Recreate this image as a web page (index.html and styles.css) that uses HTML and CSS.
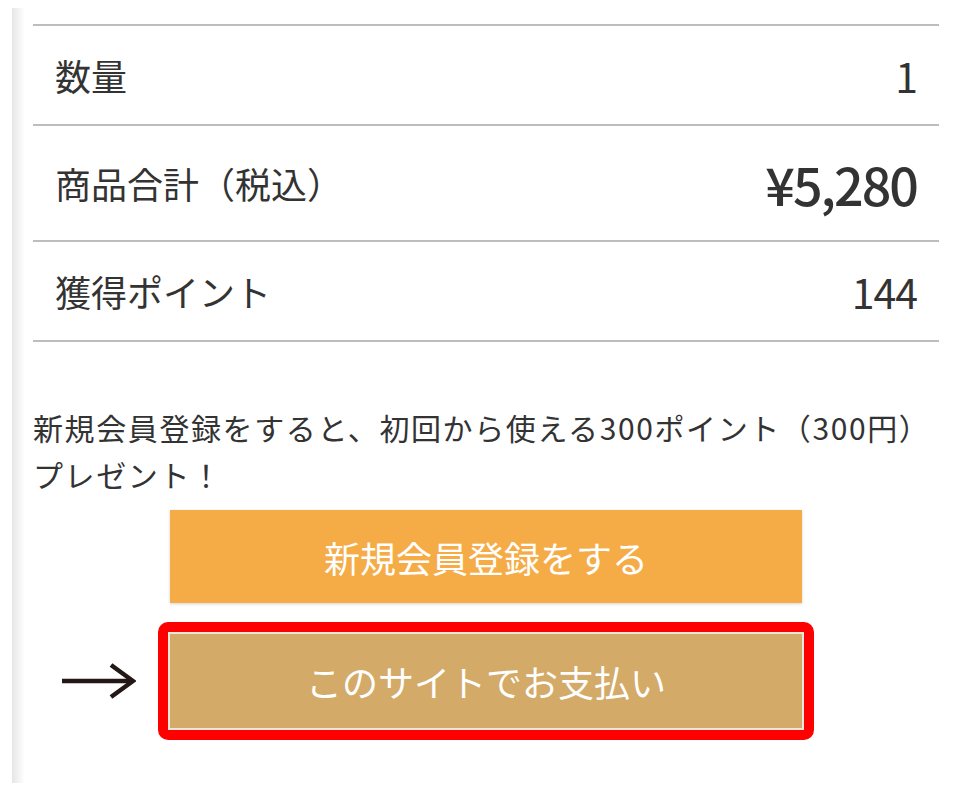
FILE: index.html
```html
<!DOCTYPE html>
<html lang="ja">
<head>
  <meta charset="UTF-8">
  <meta name="viewport" content="width=device-width, initial-scale=1">
  <title>ご注文内容</title>
  <link rel="stylesheet" href="styles.css">
</head>
<body>
  <div class="page">
    <div class="summary">
      <div class="summary-row">
        <span class="label">数量</span>
        <span class="value">1</span>
      </div>
      <div class="summary-row total">
        <span class="label">商品合計（税込）</span>
        <span class="value price">¥5,280</span>
      </div>
      <div class="summary-row">
        <span class="label">獲得ポイント</span>
        <span class="value">144</span>
      </div>
    </div>

    <p class="notice">新規会員登録をすると、初回から使える300ポイント（300円）<br>プレゼント！</p>

    <div class="actions">
      <button class="btn btn-register">新規会員登録をする</button>
      <div class="pay-row">
        <svg class="arrow" viewBox="0 0 74 36">
          <path d="M0 18H70" />
          <path d="M49 2L71 18L49 34" />
        </svg>
        <div class="highlight">
          <button class="btn btn-pay">このサイトでお支払い</button>
        </div>
      </div>
    </div>
  </div>
</body>
</html>
```

FILE: styles.css
```css
body {
  margin: 0;
  background: #fff;
  color: #333;
  font-family: "Noto Sans CJK JP", "Noto Sans", sans-serif;
}
.page {
  margin: 8px 0 0 12px;
  padding: 16px 33px 43px 21px;
  height: 716px;
  background: linear-gradient(90deg, #e6e6e6, #fff 13px) no-repeat;
  background-size: 13px 100%;
}
.summary {
  border-bottom: 2px solid #bdbdbd;
}
.summary-row {
  display: flex;
  align-items: center;
  justify-content: space-between;
  height: 98px;
  padding: 0 22px;
  border-top: 2px solid #bdbdbd;
}
.summary-row.total {
  height: 114px;
}
.label {
  font-size: 36px;
}
.value {
  font-size: 41px;
  letter-spacing: -1px;
}
.value.price {
  font-size: 52px;
  font-weight: 500;
  letter-spacing: -2px;
}
.notice {
  margin: 62px 0 12px;
  font-size: 30px;
  line-height: 47px;
  letter-spacing: 1.6px;
  white-space: nowrap;
}
.actions {
  display: flex;
  flex-direction: column;
  align-items: center;
  gap: 19px;
}
.btn {
  display: block;
  border: none;
  padding: 0;
  color: #fff;
  font-family: inherit;
  font-size: 36px;
  cursor: pointer;
}
.btn-register {
  width: 632px;
  height: 93px;
  background: #f5ac47;
  box-shadow: 0 1px 3px rgba(0, 0, 0, 0.18);
}
.pay-row {
  display: grid;
  grid-template-columns: 1fr auto 1fr;
  align-items: center;
  width: 100%;
}
.arrow {
  justify-self: end;
  width: 74px;
  height: 36px;
  margin-right: 22px;
  fill: none;
  stroke: #231815;
  stroke-width: 4.5;
}
.highlight {
  border: 10px solid #ff0000;
  border-radius: 10px;
}
.btn-pay {
  width: 636px;
  height: 98px;
  background: #d4aa68;
  border: 2px solid #ede6da;
}
```
